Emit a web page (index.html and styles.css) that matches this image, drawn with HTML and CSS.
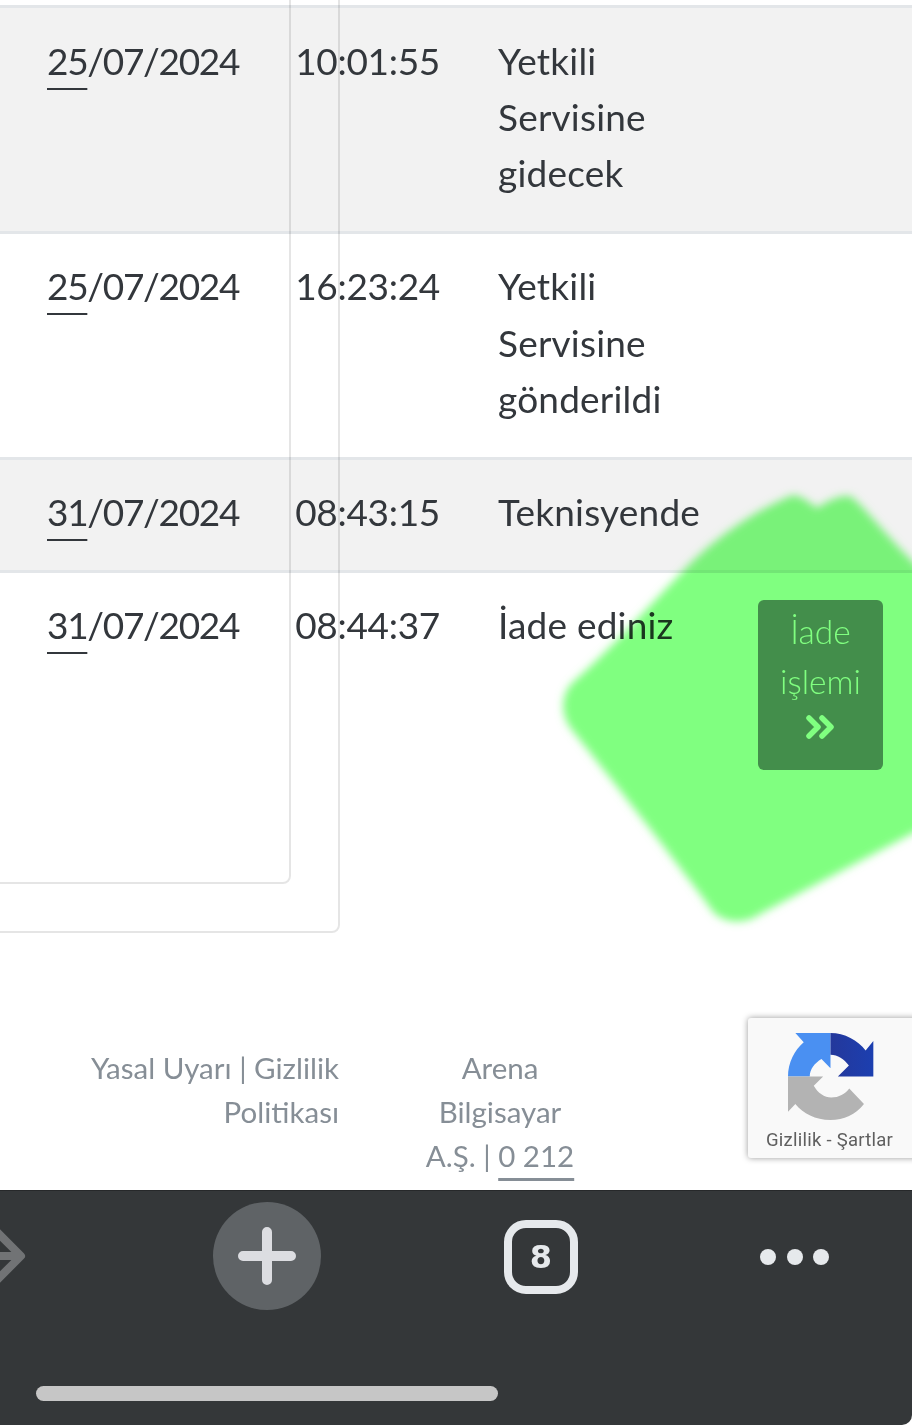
FILE: index.html
```html
<!DOCTYPE html>
<html>
  <head>
    <meta name="viewport" content="width=device-width, initial-scale=1.0">
    <link rel="stylesheet" href="styles.css">
  </head>
  <body>
    <div class="content">
      <div class="rows">
        <div class="row shaded">
          <div class="date"><a href="#">25</a>/07/2024</div>
          <div class="time">10:01:55</div>
          <div class="status">Yetkili Servisine gidecek</div>
        </div>
        <div class="row">
          <div class="date"><a href="#">25</a>/07/2024</div>
          <div class="time">16:23:24</div>
          <div class="status">Yetkili Servisine gönderildi</div>
        </div>
        <div class="row shaded">
          <div class="date"><a href="#">31</a>/07/2024</div>
          <div class="time">08:43:15</div>
          <div class="status">Teknisyende</div>
        </div>
        <div class="row">
          <div class="date"><a href="#">31</a>/07/2024</div>
          <div class="time">08:44:37</div>
          <div class="status">İade ediniz</div>
          <a class="return-btn" href="#">
            <span>İade</span>
            <span>işlemi</span>
            <svg class="chevrons" viewBox="0 0 30 24" width="30" height="24">
              <path d="M3 3l9 9-9 9M16 3l9 9-9 9" fill="none" stroke="#fff" stroke-width="5.5" stroke-linecap="round" stroke-linejoin="round"/>
            </svg>
          </a>
        </div>
      </div>

      <div class="footer">
        <div class="footer-legal">Yasal Uyarı | Gizlilik Politikası</div>
        <div class="footer-contact">Arena Bilgisayar A.Ş. | <a href="#">0 212</a> <a href="#">214 17 00</a></div>
      </div>

      <!-- card outlines that run over the table -->
      <div class="card-line outer"></div>
      <div class="card-line inner"></div>

      <svg class="marker" viewBox="0 0 912 1190" width="912" height="1190">
        <defs>
          <filter id="soft" x="-10%" y="-10%" width="120%" height="120%">
            <feGaussianBlur stdDeviation="4"/>
          </filter>
        </defs>
        <path d="M793 495C802 496 810 503 817 508C826 502 838 495 850 496C866 507 888 540 930 578L930 824L760 914C748 923 728 925 714 913C690 880 640 815 572 730C561 716 560 698 571 684C610 650 650 605 684 570C712 540 755 510 793 495Z" fill="#80ff80" filter="url(#soft)"/>
      </svg>

      <div class="recaptcha">
        <svg viewBox="200 100 260 260" width="87" height="87">
          <defs>
            <linearGradient id="darkblue" x1="0" y1="0" x2="1" y2="0">
              <stop offset="0" stop-color="#24389b"/>
              <stop offset="1" stop-color="#1c3fb0"/>
            </linearGradient>
          </defs>
          <path d="M203 230C203 190 222 152 250 128L225 100H330V205L303 178C283 190 268 208 268 230Z" fill="#4a90f2"/>
          <path d="M330 100C372 100 412 122 435 152L458 124V230H352L385 197C370 178 352 165 330 165Z" fill="url(#darkblue)"/>
          <path d="M203 230H308L280 258C292 280 312 293 332 293C355 293 374 282 386 266L430 312C405 344 370 360 330 360C285 360 248 340 225 312L203 335Z" fill="#b3b3b3"/>
        </svg>
        <div class="recaptcha-links">Gizlilik - Şartlar</div>
      </div>
    </div>

    <div class="toolbar">
      <div class="toolbar-icons">
        <svg class="forward" viewBox="0 0 28 56" width="28" height="56">
          <path d="M-10 28H18M-10 -3L21 28L-10 59" fill="none" stroke="#717375" stroke-width="8" stroke-linejoin="round"/>
        </svg>
        <div class="new-tab">
          <svg viewBox="0 0 58 58" width="58" height="58">
            <path d="M5 29H53M29 5V53" stroke="#dcdde1" stroke-width="10" stroke-linecap="round"/>
          </svg>
        </div>
        <div class="tabs">8</div>
        <div class="dots"><i></i><i></i><i></i></div>
      </div>
      <div class="home-bar"></div>
    </div>
  </body>
</html>
```

FILE: styles.css
```css
html, body {
  margin: 0;
  height: 100%;
  background-color: #fff;
}

body {
  width: 912px;
  height: 1425px;
  overflow: hidden;
  font-family: "Lato", "Open Sans", sans-serif;
  font-weight: 400;
  color: #33373c;
}

a {
  color: inherit;
  text-decoration: none;
}

.content {
  position: relative;
  height: 1190px;
  overflow: hidden;
  padding-top: 5px;
  box-sizing: border-box;
}

/* Table rows */
.row {
  display: grid;
  grid-template-columns: 203px 190px 318px 125px;
  align-items: start;
  padding: 24.5px 0 29.5px 47px;
  border-top: 3px solid #e3e6e9;
  font-size: 37px;
  line-height: 56.25px;
}

.row.shaded {
  background-color: #f2f2f2;
}

.date {
  letter-spacing: -1.3px;
  white-space: nowrap;
}

.date a {
  text-decoration: underline;
  text-decoration-thickness: 2px;
  text-underline-offset: 13px;
}

.time {
  text-align: right;
  letter-spacing: -0.3px;
}

.status {
  padding-left: 58px;
  max-width: 215px;
  letter-spacing: 0.2px;
}

.return-btn {
  display: flex;
  flex-direction: column;
  align-items: center;
  height: 170px;
  margin-top: 3px;
  box-sizing: border-box;
  padding-top: 7px;
  background-color: #868e96;
  border-radius: 6px;
  color: #fff;
  font-size: 33.5px;
  font-weight: 300;
  line-height: 49.5px;
}

.chevrons {
  margin-top: 9px;
}

/* Footer */
.footer {
  display: flex;
  padding-top: 246px;
  padding-left: 60px;
  gap: 81px;
  font-size: 29.5px;
  line-height: 44px;
  color: #868e96;
}

.footer-legal {
  width: 279px;
  text-align: right;
}

.footer-contact {
  width: 160px;
  text-align: center;
}

.footer-contact a {
  text-decoration: underline;
  text-decoration-thickness: 2.5px;
  text-underline-offset: 11px;
}

/* Overlays */
.card-line {
  position: absolute;
  left: -20px;
  top: -20px;
  box-sizing: border-box;
  border: 2px solid rgba(0, 0, 0, 0.1);
  border-radius: 8px;
  pointer-events: none;
}

.card-line.outer {
  width: 360px;
  height: 953px;
}

.card-line.inner {
  width: 311px;
  height: 904px;
}

.marker {
  position: absolute;
  left: 0;
  top: 0;
  mix-blend-mode: multiply;
  pointer-events: none;
}

.recaptcha {
  position: absolute;
  left: 748px;
  top: 1018px;
  width: 256px;
  height: 140px;
  box-sizing: border-box;
  padding: 15px 0 0 39px;
  background-color: #f9f9f9;
  border-radius: 3px;
  box-shadow: 0 0 6px rgba(0, 0, 0, 0.4);
  font-family: "Roboto", sans-serif;
  font-weight: 400;
}

.recaptcha svg {
  display: block;
}

.recaptcha-links {
  position: absolute;
  left: 18px;
  top: 111px;
  font-size: 18.5px;
  letter-spacing: 0.25px;
  line-height: 22px;
  color: #5f5f5f;
  white-space: nowrap;
}

/* Browser toolbar */
.toolbar {
  height: 235px;
  box-sizing: border-box;
  background-color: #343739;
  border-top: 1px solid #26282a;
  border-bottom-right-radius: 10px;
}

.toolbar-icons {
  position: relative;
  height: 195px;
}

.forward {
  position: absolute;
  left: 0;
  top: 37px;
}

.new-tab {
  position: absolute;
  left: 213px;
  top: 11px;
  width: 108px;
  height: 108px;
  display: flex;
  align-items: center;
  justify-content: center;
  background-color: #5f6366;
  border-radius: 50%;
}

.tabs {
  position: absolute;
  left: 504px;
  top: 29px;
  width: 74px;
  height: 74px;
  box-sizing: border-box;
  display: flex;
  align-items: center;
  justify-content: center;
  border: 8px solid #e6e9ec;
  border-radius: 22px;
  font-family: "DejaVu Sans", sans-serif;
  font-weight: 700;
  font-size: 32px;
  color: #e6e9ec;
}

.dots {
  position: absolute;
  left: 760px;
  top: 58px;
  display: flex;
  gap: 10.5px;
}

.dots i {
  display: block;
  width: 16px;
  height: 16px;
  background-color: #e6e9ec;
  border-radius: 50%;
}

.home-bar {
  width: 462px;
  height: 15px;
  margin: 0 0 0 36px;
  background-color: #c6c6c6;
  border-radius: 8px;
}
```
